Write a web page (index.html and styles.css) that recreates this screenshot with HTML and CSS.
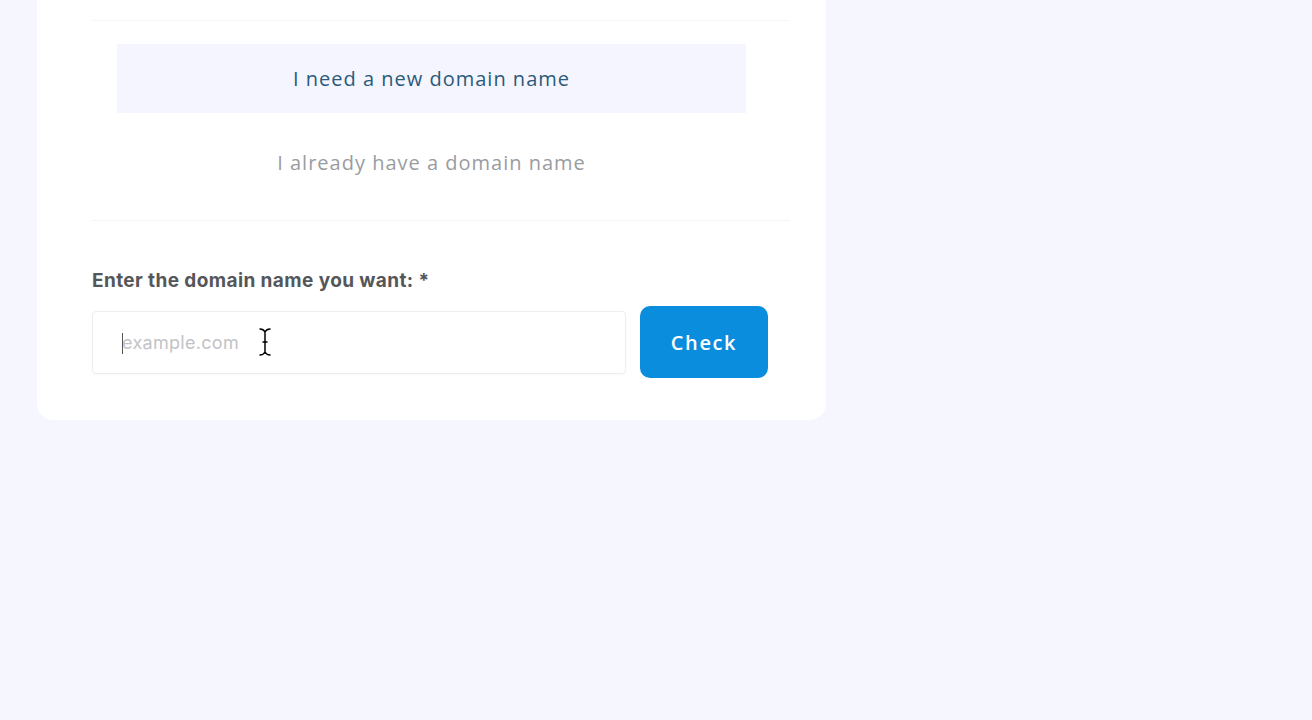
FILE: index.html
```html
<!DOCTYPE html>
<html lang="en">
<head>
<meta charset="utf-8">
<title>Domain</title>
<link rel="stylesheet" href="styles.css">
</head>
<body>
<main class="page">
  <section class="card">
    <div class="tabs">
      <div class="tab tab-active">I need a new domain name</div>
      <div class="tab tab-idle">I already have a domain name</div>
    </div>
    <label class="label" for="domain">Enter the domain name you want: *</label>
    <div class="row">
      <div class="field">
        <span class="caret"></span>
        <input id="domain" class="input" type="text" placeholder="example.com">
        <svg class="ibeam" width="14" height="30" viewBox="0 0 14 30" aria-hidden="true">
          <path d="M2 2 C5 2 6 3 7 5 C8 3 9 2 12 2 M7 5 V25 M2 28 C5 28 6 27 7 25 C8 27 9 28 12 28 M5 15 H9" fill="none" stroke="#fff" stroke-width="3.4" stroke-linecap="round"/>
          <path d="M2 2 C5 2 6 3 7 5 C8 3 9 2 12 2 M7 5 V25 M2 28 C5 28 6 27 7 25 C8 27 9 28 12 28 M5 15 H9" fill="none" stroke="#000" stroke-width="1.5" stroke-linecap="round"/>
        </svg>
      </div>
      <button class="btn" type="button">Check</button>
    </div>
  </section>
</main>
</body>
</html>
```
FILE: styles.css
```css
* { box-sizing: border-box; }
html, body { margin: 0; padding: 0; }
body {
  background: #f5f6fe;
  width: 1312px;
  height: 720px;
  overflow: hidden;
  font-family: "Open Sans", "Liberation Sans", sans-serif;
}
.page {
  padding-left: 37px;
}
.card {
  width: 789px;
  margin-top: -20px;
  background: #ffffff;
  border-radius: 0 0 16px 16px;
  padding: 40px 58px 42px 55px;
}
.tabs {
  margin-right: -22px;
  border-top: 1px solid #f6f6f8;
  border-bottom: 1px solid #f3f4f6;
  padding: 23px 44px 10px 25px;
}
.tab {
  text-align: center;
  font-size: 20px;
  letter-spacing: 1px;
  font-weight: 500;
}
.tab-active {
  height: 69px;
  line-height: 70px;
  background: #f4f5fe;
  color: #2b5a7b;
}
.tab-idle {
  height: 97px;
  line-height: 99px;
  color: #9a9ca1;
}
.label {
  display: block;
  margin-top: 49px;
  font-family: "Inter", "Liberation Sans", sans-serif;
  font-weight: 700;
  font-size: 19px;
  letter-spacing: 0.4px;
  line-height: 22px;
  color: #555659;
}
.row {
  display: flex;
  align-items: center;
  gap: 14px;
  margin-top: 14px;
}
.field {
  position: relative;
  width: 534px;
  height: 63px;
  border: 1px solid #eeeef0;
  border-radius: 4px;
  background: #fff;
  box-shadow: 0 1px 2px rgba(0, 0, 0, 0.03);
}
.input {
  width: 100%;
  height: 100%;
  border: 0;
  outline: none;
  background: transparent;
  padding: 0 0 0 29px;
  font-family: "Inter", "Liberation Sans", sans-serif;
  font-size: 18px;
  letter-spacing: 0.3px;
  color: #333;
}
.input::placeholder { color: #c2c3c6; }
.caret {
  position: absolute;
  left: 29px;
  top: 21px;
  width: 1px;
  height: 21px;
  background: #555;
}
.ibeam {
  position: absolute;
  left: 165px;
  top: 15px;
}
.btn {
  width: 128px;
  height: 72px;
  border: 0;
  border-radius: 10px;
  background: #0b8ddd;
  color: #fff;
  font-family: "Open Sans", "Liberation Sans", sans-serif;
  font-size: 20px;
  letter-spacing: 1.6px;
  font-weight: 600;
}
```
